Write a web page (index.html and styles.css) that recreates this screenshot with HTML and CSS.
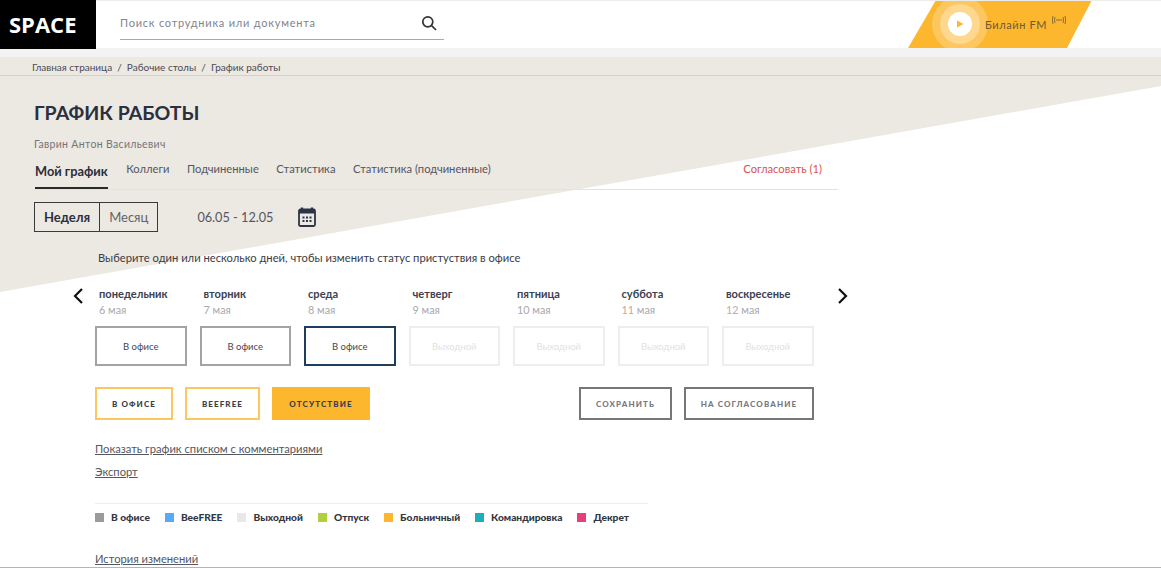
FILE: index.html
```html
<!DOCTYPE html>
<html lang="ru">
<head>
    <meta charset="UTF-8">
    <title>График работы</title>
    <link rel="stylesheet" href="styles.css">
</head>
<body>
    <header class="topbar">
        <div class="logo">SPACE</div>
        <div class="search">
            <span class="search-text">Поиск сотрудника или документа</span>
            <svg width="16" height="16" viewBox="0 0 16 16" fill="none" stroke="#333" stroke-width="1.7"><circle cx="6.8" cy="6.8" r="5"/><path d="M10.6 10.6 L15 15"/></svg>
        </div>
        <div class="radio">
            <svg class="radio-bg" width="184" height="48" viewBox="0 0 184 48"><polygon points="0,48 28,0 184,0 159,48" fill="#fdb72f"/><circle cx="52" cy="24" r="28" fill="#fdc65e"/><circle cx="52" cy="24" r="20" fill="#fed88f"/><circle cx="52" cy="24" r="12" fill="#fff"/><polygon points="49,20.5 55.5,24 49,27.5" fill="#fdb72f"/></svg>
            <span class="radio-text">Билайн FM</span>
            <svg class="radio-wave" width="14" height="10" viewBox="0 0 14 10" fill="none" stroke="#6b5a35" stroke-width="0.8"><path d="M1 1 Q-0.5 5 1 9M3 2 Q2 5 3 8M11 2 Q12 5 11 8M13 1 Q14.5 5 13 9M4 5 H10"/></svg>
        </div>
    </header>
    <div class="strip"></div>

    <div class="page">
        <div class="breadcrumbs">Главная страница&nbsp; / &nbsp;Рабочие столы&nbsp; / &nbsp;График работы</div>

        <main class="content">
            <h1>ГРАФИК РАБОТЫ</h1>
            <p class="person">Гаврин Антон Васильевич</p>

            <nav class="tabs">
                <a class="tab active">Мой график</a>
                <a class="tab">Коллеги</a>
                <a class="tab">Подчиненные</a>
                <a class="tab">Статистика</a>
                <a class="tab">Статистика (подчиненные)</a>
                <a class="tab approve">Согласовать (1)</a>
            </nav>

            <div class="period">
                <div class="switch">
                    <span class="switch-item on">Неделя</span>
                    <span class="switch-item">Месяц</span>
                </div>
                <span class="dates">06.05 - 12.05</span>
                <svg width="18" height="20" viewBox="0 0 18 20"><path d="M4 0.5v3M14 0.5v3" stroke="#2c3445" stroke-width="2.4"/><rect x="1" y="2.5" width="16" height="16.5" rx="1.5" fill="none" stroke="#2c3445" stroke-width="1.8"/><rect x="1" y="2.5" width="16" height="4" fill="#2c3445"/><path d="M4.5 9.5h2v2h-2zM8 9.5h2v2h-2zM11.5 9.5h2v2h-2zM4.5 13h2v2h-2zM8 13h2v2h-2zM11.5 13h2v2h-2z" fill="#2c3445"/></svg>
            </div>

            <div class="schedule">
                <p class="hint">Выберите один или несколько дней, чтобы изменить статус пристуствия в офисе</p>

                <div class="week">
                    <svg class="arrow arrow-left" width="12" height="16" viewBox="0 0 12 16" fill="none" stroke="#111" stroke-width="2.2"><path d="M10 1 L3 8 L10 15"/></svg>
                    <svg class="arrow arrow-right" width="12" height="16" viewBox="0 0 12 16" fill="none" stroke="#111" stroke-width="2.2"><path d="M2 1 L9 8 L2 15"/></svg>

                    <div class="day">
                        <div class="day-name">понедельник</div>
                        <div class="day-date">6 мая</div>
                        <div class="cell office">В офисе</div>
                    </div>
                    <div class="day">
                        <div class="day-name">вторник</div>
                        <div class="day-date">7 мая</div>
                        <div class="cell office">В офисе</div>
                    </div>
                    <div class="day">
                        <div class="day-name">среда</div>
                        <div class="day-date">8 мая</div>
                        <div class="cell office today">В офисе</div>
                    </div>
                    <div class="day">
                        <div class="day-name">четверг</div>
                        <div class="day-date">9 мая</div>
                        <div class="cell">Выходной</div>
                    </div>
                    <div class="day">
                        <div class="day-name">пятница</div>
                        <div class="day-date">10 мая</div>
                        <div class="cell">Выходной</div>
                    </div>
                    <div class="day">
                        <div class="day-name">суббота</div>
                        <div class="day-date"><span class="weekend">11</span> мая</div>
                        <div class="cell">Выходной</div>
                    </div>
                    <div class="day">
                        <div class="day-name">воскресенье</div>
                        <div class="day-date"><span class="weekend">12</span> мая</div>
                        <div class="cell">Выходной</div>
                    </div>
                </div>

                <div class="actions">
                    <button class="btn yellow btn-office">В ОФИСЕ</button>
                    <button class="btn yellow btn-free">BEEFREE</button>
                    <button class="btn solid">ОТСУТСТВИЕ</button>
                    <button class="btn grey btn-save">СОХРАНИТЬ</button>
                    <button class="btn grey btn-send">НА СОГЛАСОВАНИЕ</button>
                </div>

                <a class="link link-list">Показать график списком с комментариями</a>
                <a class="link link-export">Экспорт</a>

                <ul class="legend">
                    <li><i class="mark m-office"></i>В офисе</li>
                    <li><i class="mark m-free"></i>BeeFREE</li>
                    <li><i class="mark m-off"></i>Выходной</li>
                    <li><i class="mark m-vac"></i>Отпуск</li>
                    <li><i class="mark m-sick"></i>Больничный</li>
                    <li><i class="mark m-trip"></i>Командировка</li>
                    <li><i class="mark m-mat"></i>Декрет</li>
                </ul>

                <a class="link link-history">История изменений</a>
            </div>
        </main>
    </div>
</body>
</html>
```

FILE: styles.css
```css
html, body {
    height: 100%;
}

body {
    margin: 0;
    height: 568px;
    overflow: hidden;
    font-family: Lato, "Open Sans", sans-serif;
    color: #2c3445;
    background: #ffffff;
    box-sizing: border-box;
    border-bottom: 1px solid #b5b5b5;
}

.topbar {
    display: flex;
    height: 48px;
    background: #ffffff;
    border-top: 1px solid #ececec;
    box-sizing: border-box;
}

.logo {
    width: 96px;
    margin-top: -1px;
    height: 49px;
    padding-left: 9px;
    box-sizing: border-box;
    background: #000000;
    color: #ffffff;
    font-family: "Open Sans", sans-serif;
    font-size: 22px;
    font-weight: 700;
    line-height: 49px;
}

.search {
    display: flex;
    justify-content: space-between;
    align-items: center;
    width: 324px;
    height: 39px;
    margin-left: 24px;
    padding: 5px 7px 0 0;
    box-sizing: border-box;
    border-bottom: 1px solid #a9a9ae;
}

.search-text {
    font-size: 11px;
    letter-spacing: 0.78px;
    color: #82848c;
}

.radio {
    position: relative;
    display: flex;
    align-items: center;
    width: 184px;
    height: 47px;
    margin-left: 464px;
    overflow: hidden;
}

.radio-bg {
    position: absolute;
    left: 0;
    top: -1px;
}

.radio-text {
    position: relative;
    margin: -1px 0 0 77px;
    font-size: 11px;
    letter-spacing: 0.6px;
    color: #6b5a35;
}

.radio-wave {
    position: relative;
    margin: -9px 0 0 5px;
}

.strip {
    height: 9px;
    background: #f3f3f3;
}

.page {
    position: relative;
    height: 510px;
}

/* beige wedge behind the content */
.page::before {
    content: "";
    position: absolute;
    inset: 0;
    background: #ece8e2;
    clip-path: polygon(0 0, 100% 0, 100% 29px, 0 235px);
}

.breadcrumbs {
    position: relative;
    height: 18px;
    padding-left: 32px;
    border-bottom: 1px solid #d2d0cd;
    font-size: 10px;
    line-height: 20px;
    color: #4c4a55;
}

.content {
    position: relative;
    width: 804px;
    padding-left: 34px;
}

h1 {
    margin: 0;
    padding-top: 25px;
    font-size: 19.5px;
    line-height: 24px;
    font-weight: 700;
    color: #2a3040;
}

.person {
    margin: 12px 0 0;
    font-size: 10.5px;
    line-height: 14px;
    letter-spacing: 0.33px;
    color: #75767c;
}

.tabs {
    display: flex;
    height: 30px;
    margin-top: 8px;
    padding-left: 1px;
    border-bottom: 1px solid #e2e2e4;
}

.tab {
    margin-right: 17.5px;
    font-size: 11.2px;
    line-height: 19px;
    color: #55575f;
}

.tab.active {
    height: 28px;
    margin-right: 18.5px;
    border-bottom: 2px solid #2a2a2a;
    font-size: 12.8px;
    line-height: 24px;
    font-weight: 700;
    color: #2a2f3c;
}

.tab.approve {
    margin: 0 16px 0 auto;
    color: #d9534f;
}

.period {
    display: flex;
    align-items: center;
    height: 30px;
    margin-top: 12px;
}

.switch {
    display: flex;
    height: 30px;
    box-sizing: border-box;
    border: 1px solid #3a3a3a;
    font-size: 13px;
    line-height: 28px;
}

.switch-item {
    padding: 0 9px;
    color: #62646b;
}

.switch-item.on {
    border-right: 1px solid #3a3a3a;
    font-weight: 700;
    color: #2a2f3c;
}

.dates {
    margin: 0 25px 0 39px;
    font-size: 12.7px;
    color: #55575f;
}

.schedule {
    padding-left: 61px;
}

.hint {
    margin: 19px 0 0 3px;
    font-size: 11.2px;
    line-height: 14px;
    color: #3b3d47;
}

.week {
    position: relative;
    display: flex;
    gap: 13px;
    margin-top: 22px;
}

.arrow {
    position: absolute;
    top: 1px;
}

.arrow-left {
    left: -23px;
}

.arrow-right {
    left: 742px;
}

.day {
    width: 91.5px;
}

.day-name {
    padding-left: 4px;
    font-size: 11.1px;
    line-height: 14px;
    font-weight: 700;
    color: #3d4150;
}

.day-date {
    margin-top: 2px;
    padding-left: 4px;
    font-size: 10.8px;
    line-height: 14px;
    color: #a9a9ae;
}

.weekend {
    color: #c9a8a0;
}

.cell {
    display: flex;
    align-items: center;
    justify-content: center;
    height: 40px;
    box-sizing: border-box;
    margin-top: 9px;
    border: 2px solid #eeeeee;
    font-size: 9.5px;
    color: #e2e2e2;
}

.cell.office {
    border-color: #a3a3a3;
    color: #444650;
}

.cell.today {
    border-color: #1f3d5c;
}

.actions {
    display: flex;
    margin-top: 21px;
    width: 719px;
}

.btn {
    height: 33px;
    padding: 0;
    background: #ffffff;
    font-family: Lato, sans-serif;
    font-size: 8px;
    font-weight: 900;
    letter-spacing: 1.1px;
    color: #3a3d4a;
    box-sizing: border-box;
    border: 2px solid #fdc65e;
}

.btn.solid {
    width: 98px;
    margin-left: 12px;
    background: #fdb72f;
    border-color: #fdb72f;
}

.btn.grey {
    border-color: #777777;
    color: #77787e;
}

.btn-office {
    width: 78px;
}

.btn-free {
    width: 75px;
    margin-left: 12px;
}

.btn-save {
    width: 93px;
    margin-left: auto;
}

.btn-send {
    width: 130px;
    margin-left: 12px;
}

.link {
    display: block;
    width: max-content;
    font-size: 11.2px;
    line-height: 14px;
    text-decoration: underline;
    color: #55575f;
}

.link-list {
    margin-top: 22px;
}

.link-export {
    margin-top: 9px;
}

.legend {
    display: flex;
    width: 553px;
    height: 27px;
    box-sizing: border-box;
    margin: 24px 0 0;
    padding: 6px 0 0;
    list-style: none;
    border-top: 1px solid #eeeeee;
    font-size: 10.2px;
    font-weight: 900;
    white-space: nowrap;
    color: #33363f;
}

.legend li {
    display: flex;
    align-items: center;
    height: 14px;
    margin-right: 15px;
}

.mark {
    width: 9px;
    height: 9px;
    margin-right: 7px;
}

.m-office { background: #9b9b9b; }
.m-free { background: #5aa9f5; }
.m-off { background: #e8e8e8; }
.m-vac { background: #b2cf3e; }
.m-sick { background: #fdb72f; }
.m-trip { background: #1eadbb; }
.m-mat { background: #e63f7c; }

.link-history {
    margin-top: 22px;
}
```
